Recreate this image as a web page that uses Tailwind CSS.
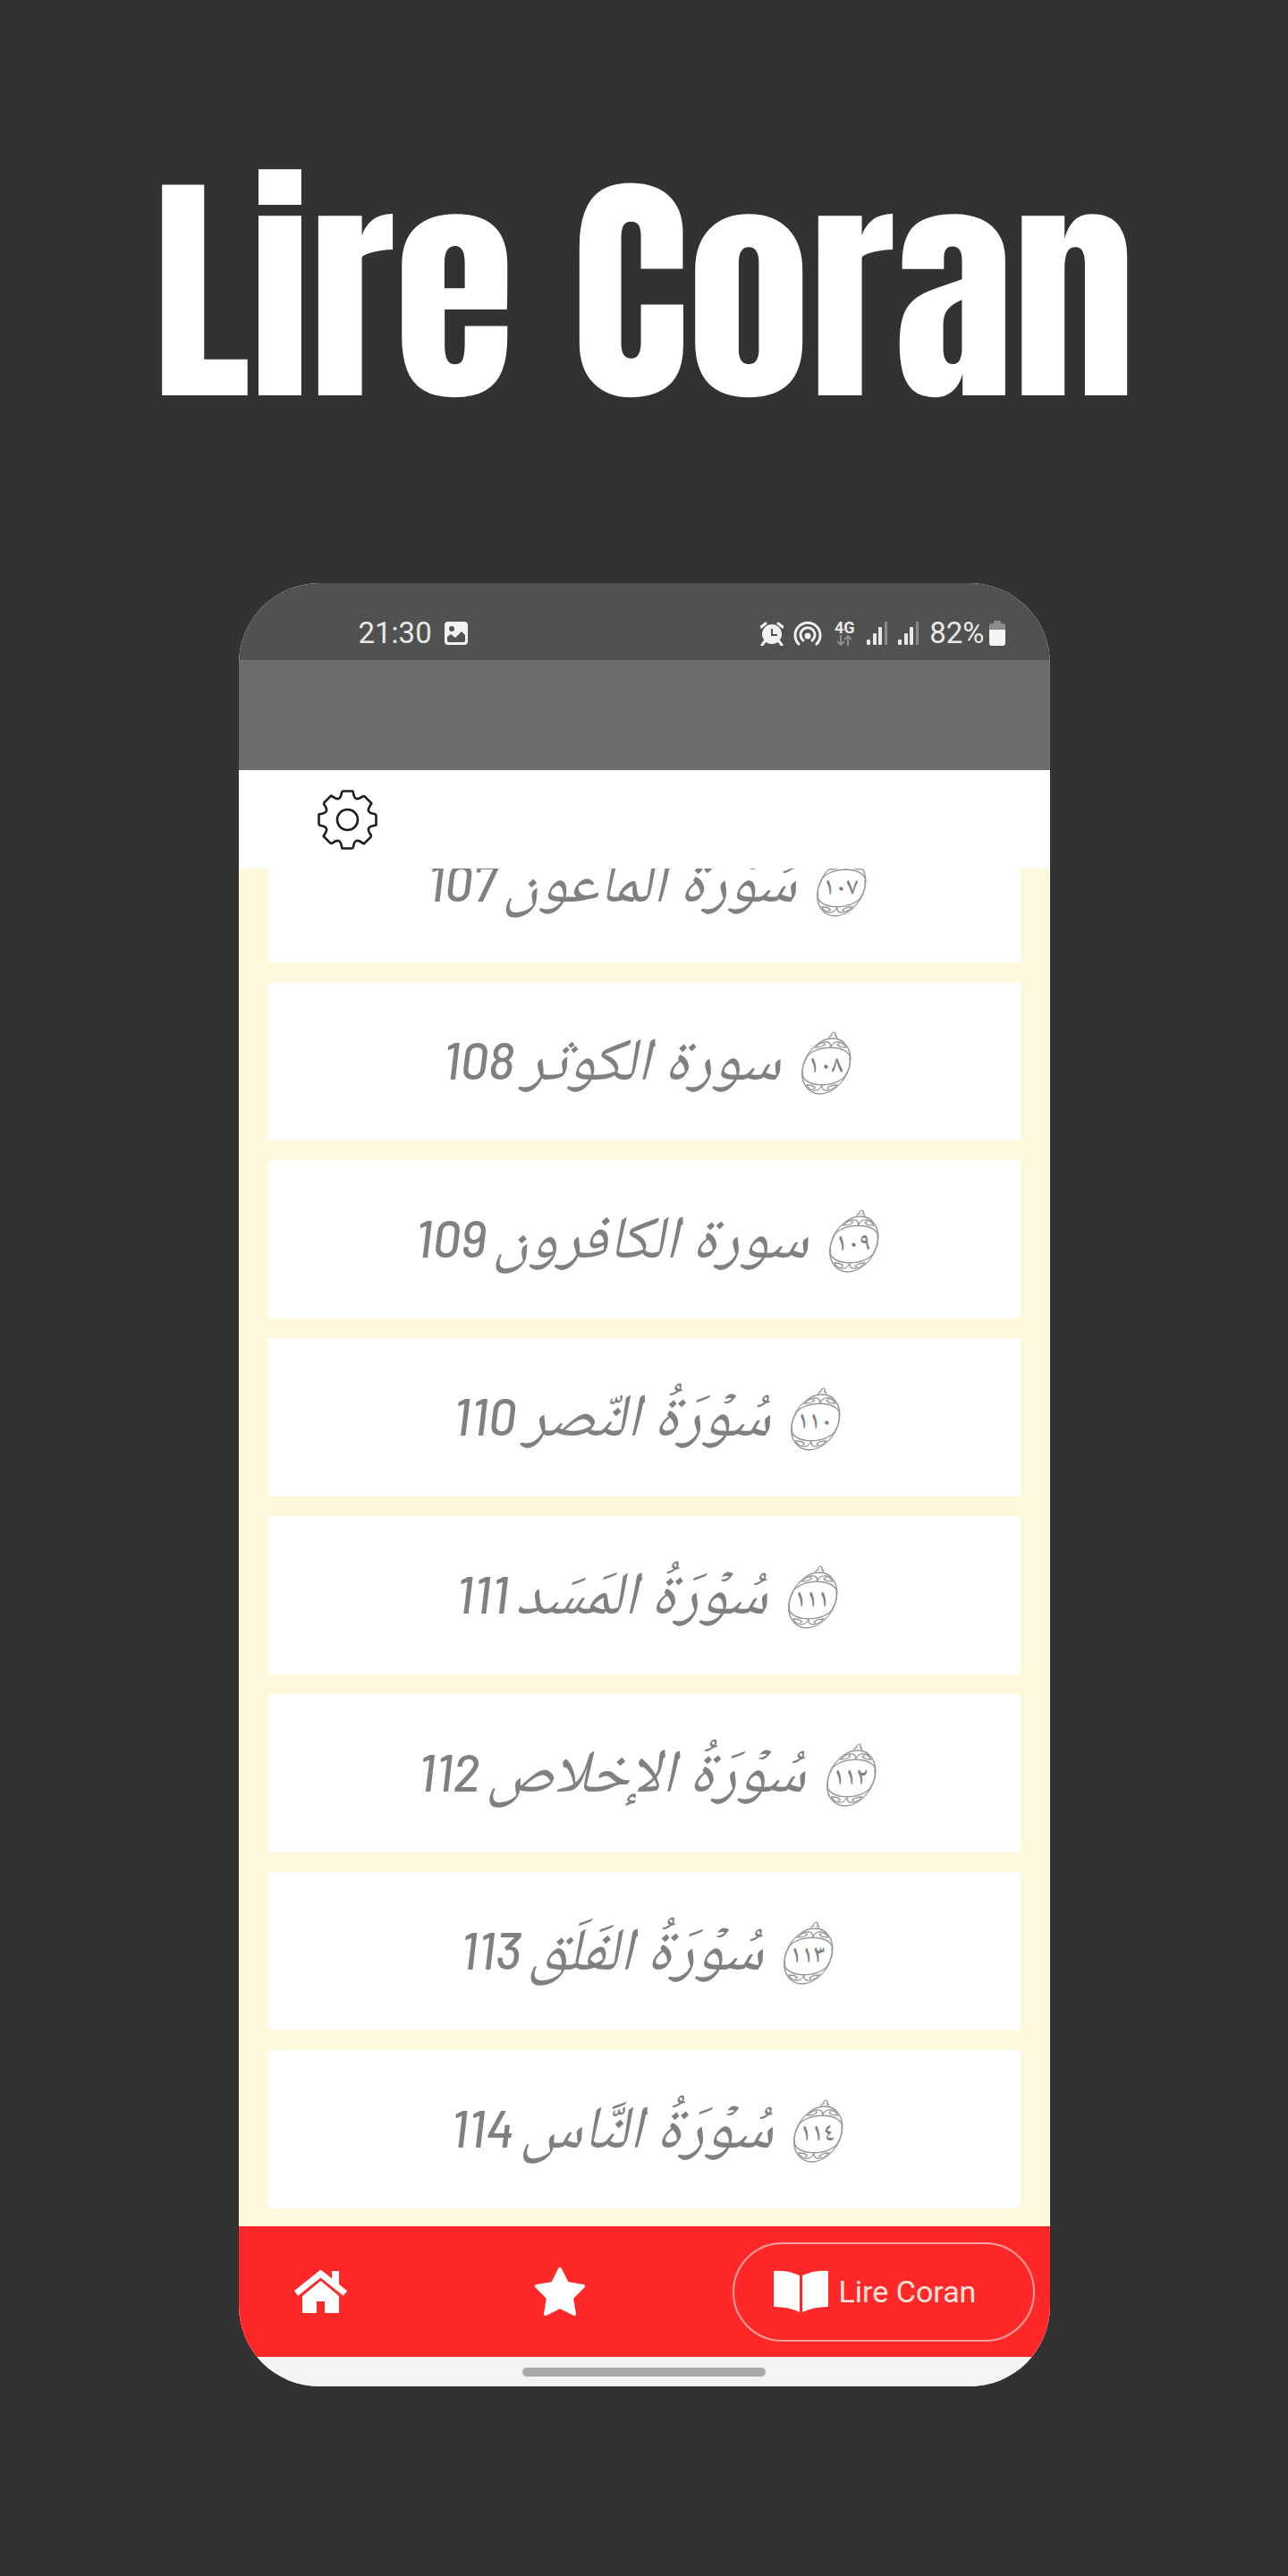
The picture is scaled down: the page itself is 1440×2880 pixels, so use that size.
<!DOCTYPE html>
<html lang="fr">
  <head>
    <meta charset="UTF-8" />
    <meta name="viewport" content="width=device-width, initial-scale=1.0" />
    <title>Lire Coran</title>
    <script src="https://cdn.jsdelivr.net/npm/@tailwindcss/browser@4"></script>
  </head>
  <body class="bg-[#323232] min-h-screen flex flex-col items-center font-[Roboto,sans-serif]">
    <h1 class="py-[166px] text-[274px] leading-[320px] text-white text-center whitespace-nowrap font-[Anton,sans-serif]">Lire Coran</h1>

    <!-- Shared shapes -->
    <svg class="hidden" aria-hidden="true">
      <symbol id="signal" viewBox="0 0 24 27">
        <rect x="0" y="20" width="4" height="6" rx="1" fill="#e8e8e8" />
        <rect x="7" y="13" width="4" height="13" rx="1" fill="#e8e8e8" />
        <rect x="13" y="6" width="4" height="20" rx="1" fill="#e8e8e8" />
        <rect x="20" y="0" width="3" height="26" rx="1" fill="#8b8c8b" />
      </symbol>
      <symbol id="ayah" viewBox="0 0 60 72">
        <g transform="translate(37 38) skewX(-13) translate(-37 -38)" fill="none" stroke="#979797" stroke-width="1.3">
          <ellipse cx="31" cy="39" rx="26" ry="31" />
          <path d="M6 31C10 14 52 14 56 31M6 47C10 64 52 64 56 47" />
          <path d="M5 39q0-5 2-9M57 39q0-5-2-9M5 39q0 5 2 9M57 39q0 5-2 9" />
          <path d="M27 8q-1-3 2-3q-1-3 2-4q3 1 2 4q3 0 2 3" />
          <path d="M31 18q-1-7-8-6q-6 1-9 6q6 0 9-2q3-2-1-2M31 18q1-7 8-6q6 1 9 6q-6 0-9-2q-3-2 1-2" />
          <path d="M31 60q-1 7-8 6q-6-1-9-6q6 0 9 2q3 2-1 2M31 60q1 7 8 6q6-1 9-6q-6 0-9 2q-3 2 1 2" />
        </g>
      </symbol>
    </svg>

    <main class="w-full max-w-[907px] rounded-[90px] overflow-hidden bg-white">
      <!-- Status bar -->
      <div class="h-[86px] pt-[26px] pl-[134px] pr-[50px] flex items-center justify-between bg-[#505250] text-[#e8e8e8] text-[33px] leading-10">
        <div class="flex items-center gap-[14px]">
          <span>21:30</span>
          <svg class="w-[26px] h-[26px]" viewBox="0 0 26 26">
            <rect width="26" height="26" rx="4" fill="#f2f2f2" />
            <circle cx="8" cy="8" r="3" fill="#515251" />
            <path d="M3 17l4-3 5 4 7-7 4 4v6q0 2-2 2H5q-2 0-2-2z" fill="#515251" />
          </svg>
        </div>
        <div class="flex items-center gap-[11px]">
          <svg class="w-[26px] h-[27px]" viewBox="0 0 26 27">
            <circle cx="13" cy="14" r="11" fill="#f2f2f2" />
            <path d="M1 6l5-4M25 6l-5-4M5 22l-3 4M21 22l3 4" stroke="#f2f2f2" stroke-width="3" stroke-linecap="round" />
            <path d="M13 8v7h6" fill="none" stroke="#515251" stroke-width="2" />
          </svg>
          <svg class="w-8 h-7" viewBox="0 0 32 28" fill="none" stroke="#f2f2f2" stroke-width="3" stroke-linecap="round">
            <path d="M6 26a14 14 0 1 1 20 0" />
            <path d="M11 22a8 8 0 1 1 10 0" />
            <circle cx="16" cy="17" r="2" fill="#f2f2f2" />
          </svg>
          <div class="w-7 flex flex-col items-center">
            <span class="text-[18px] leading-4 font-bold">4G</span>
            <svg class="w-[18px] h-3" viewBox="0 0 18 12" fill="none" stroke="#8b8c8b" stroke-width="2">
              <path d="M5 0v11M1 7l4 4 4-4M13 12V1M9 5l4-4 4 4" />
            </svg>
          </div>
          <svg class="w-6 h-[27px]"><use href="#signal" /></svg>
          <svg class="w-6 h-[27px]"><use href="#signal" /></svg>
          <div class="flex items-center gap-[5px]">
            <span>82%</span>
            <svg class="w-[18px] h-7" viewBox="0 0 18 28">
              <path d="M5 0h8v3h3q2 0 2 2v7H0V5q0-2 2-2h3z" fill="#8b8c8b" />
              <path d="M0 10h18v15q0 3-3 3H3q-3 0-3-3z" fill="#f5f5f5" />
            </svg>
          </div>
        </div>
      </div>
      <div class="h-[123px] bg-[#6b6d6b]"></div>

      <!-- Toolbar -->
      <div class="h-[110px] pl-[88px] flex items-center">
        <button type="button" aria-label="Paramètres">
          <svg class="w-[67px] h-[67px]" viewBox="-33.5 -33.5 67 67" fill="none" stroke="#1c1c1c" stroke-width="2.6" stroke-linejoin="round">
            <g id="tooth"><path d="M-6-32H6C7-28 7-24.7 9.8-23.6C12.6-22.5 14.9-24.8 18.4-26.9" /></g>
            <use href="#tooth" transform="rotate(45)" />
            <use href="#tooth" transform="rotate(90)" />
            <use href="#tooth" transform="rotate(135)" />
            <use href="#tooth" transform="rotate(180)" />
            <use href="#tooth" transform="rotate(225)" />
            <use href="#tooth" transform="rotate(270)" />
            <use href="#tooth" transform="rotate(315)" />
            <circle r="11.5" />
          </svg>
        </button>
      </div>

      <!-- Surah list, scrolled to the end -->
      <ul id="surahs" dir="rtl" class="px-[33px] pb-5 flex flex-col gap-[22px] overflow-hidden bg-[#fef8dd]"></ul>

      <!-- Bottom navigation -->
      <nav class="h-[146px] pl-[61px] pr-[17px] flex items-center bg-[#ff2828]">
        <a href="#" aria-label="Accueil">
          <svg class="w-[61px] h-12" viewBox="0 0 61 48" fill="#fff">
            <path d="M3 26L30.500 4L58 26" fill="none" stroke="#fff" stroke-width="7" />
            <path d="M43 1h8v18l-8-7z" />
            <path d="M30.500 12L51 29V48H35V35H26V48H10V29z" />
          </svg>
        </a>
        <a href="#" aria-label="Favoris" class="ml-[208px]">
          <svg class="w-[58px] h-14" viewBox="0 0 58 56" fill="#fff" stroke="#fff" stroke-width="4" stroke-linejoin="round">
            <path d="M29 3L37 19L55 22L42 35L45 53L29 45L13 53L16 35L3 22L21 19z" />
          </svg>
        </a>
        <a href="#" class="ml-auto w-[338px] h-[111px] pl-11 flex items-center gap-3 border-2 border-[#ffa09a] rounded-full text-[34px] leading-10 text-[#ffe4de]">
          <svg class="w-[61px] h-12" viewBox="0 0 61 48" fill="#fff">
            <path d="M0 1q16-1 29 5v41q-12-6-29-6zM61 1q-16-1-29 5v41q12-6 29-6z" />
          </svg>
          <span>Lire Coran</span>
        </a>
      </nav>
      <div class="h-[33px] flex items-center justify-center bg-[#f4f4f4]">
        <div class="w-[272px] h-[10px] rounded-full bg-[#a9a9a8]"></div>
      </div>
    </main>

    <script>
      const surahs = [
        { id: 107, digits: "١٠٧", name: "سُوۡرَةُ المَاعون" },
        { id: 108, digits: "١٠٨", name: "سورة الكوثر" },
        { id: 109, digits: "١٠٩", name: "سورة الكافرون" },
        { id: 110, digits: "١١٠", name: "سُوۡرَةُ النّصر" },
        { id: 111, digits: "١١١", name: "سُوۡرَةُ المَسَد" },
        { id: 112, digits: "١١٢", name: "سُوۡرَةُ الإخلاص" },
        { id: 113, digits: "١١٣", name: "سُوۡرَةُ الفَلَق" },
        { id: 114, digits: "١١٤", name: "سُوۡرَةُ النَّاس" },
      ];

      document.getElementById("surahs").innerHTML = surahs
        .map(
          (surah) => `
          <li class="first:-mt-[72px]">
            <a href="#" class="h-[177px] pt-1 pl-2 flex items-center justify-center gap-5 rounded-sm bg-white text-[#808080] whitespace-nowrap">
              <svg class="w-[60px] h-[72px]" viewBox="0 0 60 72">
                <use href="#ayah" />
                <text x="30" y="46" text-anchor="middle" fill="#808080" class="text-[28px] font-medium font-['Noto_Naskh_Arabic',serif]">${surah.digits}</text>
              </svg>
              <div class="pt-[6px] flex items-baseline gap-2 italic">
                <span lang="ar" class="text-[68px] leading-[100px] font-['Noto_Naskh_Arabic',serif]">${surah.name}</span>
                <span class="text-[57px] leading-none font-medium font-[Barlow,sans-serif]">${surah.id}</span>
              </div>
            </a>
          </li>`
        )
        .join("");
    </script>
  </body>
</html>
